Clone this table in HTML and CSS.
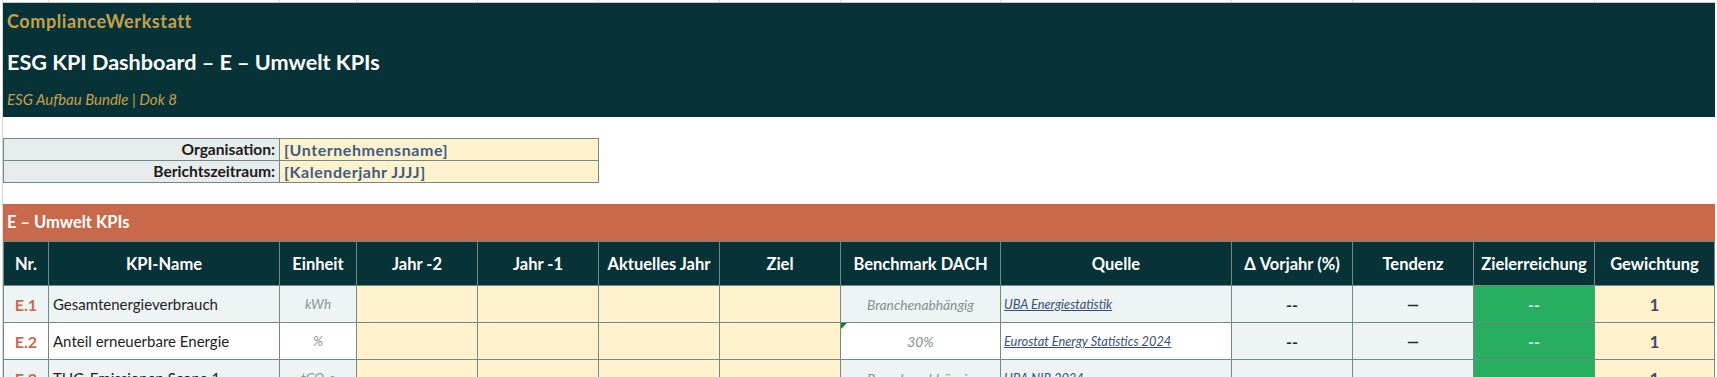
FILE: index.html
```html
<!DOCTYPE html>
<html lang="de">
<head>
<meta charset="utf-8">
<title>ESG KPI Dashboard – E – Umwelt KPIs</title>
<link rel="stylesheet" href="styles.css">
</head>
<body>
<div class="sheet">
  <div class="gridstrip">
    <span></span><span></span><span></span><span></span><span></span><span></span><span></span><span></span><span></span><span></span><span></span><span></span><span></span>
  </div>

  <header class="banner">
    <div class="brand">ComplianceWerkstatt</div>
    <h1 class="title">ESG KPI Dashboard – E – Umwelt KPIs</h1>
    <div class="subtitle">ESG Aufbau Bundle | Dok 8</div>
  </header>

  <div class="meta">
    <div class="meta-label">Organisation:</div>
    <div class="meta-value">[Unternehmensname]</div>
    <div class="meta-label">Berichtszeitraum:</div>
    <div class="meta-value">[Kalenderjahr JJJJ]</div>
  </div>

  <div class="section">E – Umwelt KPIs</div>

  <div class="kpi">
    <div class="h">Nr.</div>
    <div class="h">KPI-Name</div>
    <div class="h">Einheit</div>
    <div class="h">Jahr -2</div>
    <div class="h">Jahr -1</div>
    <div class="h">Aktuelles Jahr</div>
    <div class="h">Ziel</div>
    <div class="h">Benchmark DACH</div>
    <div class="h">Quelle</div>
    <div class="h">Δ Vorjahr (%)</div>
    <div class="h">Tendenz</div>
    <div class="h">Zielerreichung</div>
    <div class="h">Gewichtung</div>

    <div class="c light nr">E.1</div>
    <div class="c light name">Gesamtenergieverbrauch</div>
    <div class="c light unit">kWh</div>
    <div class="c cream"></div>
    <div class="c cream"></div>
    <div class="c cream"></div>
    <div class="c cream"></div>
    <div class="c light bench">Branchenabhängig</div>
    <div class="c light src"><a class="link">UBA Energiestatistik</a></div>
    <div class="c light dash">--</div>
    <div class="c light trend">—</div>
    <div class="c green goal">--</div>
    <div class="c cream weight">1</div>

    <div class="c white nr">E.2</div>
    <div class="c white name">Anteil erneuerbare Energie</div>
    <div class="c white unit">%</div>
    <div class="c cream"></div>
    <div class="c cream"></div>
    <div class="c cream"></div>
    <div class="c cream"></div>
    <div class="c white bench note">30%</div>
    <div class="c white src"><a class="link">Eurostat Energy Statistics 2024</a></div>
    <div class="c light dash">--</div>
    <div class="c light trend">—</div>
    <div class="c green goal">--</div>
    <div class="c cream weight">1</div>

    <div class="c light nr">E.3</div>
    <div class="c light name">THG-Emissionen Scope 1</div>
    <div class="c light unit">tCO₂e</div>
    <div class="c cream"></div>
    <div class="c cream"></div>
    <div class="c cream"></div>
    <div class="c cream"></div>
    <div class="c light bench">Branchenabhängig</div>
    <div class="c light src"><a class="link">UBA NIR 2024</a></div>
    <div class="c light dash">--</div>
    <div class="c light trend">—</div>
    <div class="c green goal">--</div>
    <div class="c cream weight">1</div>
  </div>
</div>
</body>
</html>
```

FILE: styles.css
```css
html, body {
  margin: 0;
  padding: 0;
  background: #ffffff;
  overflow: hidden;
}

body {
  font-family: Lato, "Open Sans", "Noto Sans", sans-serif;
  color: #1e1e1e;
}

.sheet {
  margin-left: 2px;
  border-left: 1px solid #d6d6d6;
  min-height: 400px;
}

/* faint spreadsheet gridlines above the banner */
.gridstrip {
  display: grid;
  grid-template-columns: 45px 230px 76px 120px 120px 120px 120px 159px 230px 120px 120px 120px 120px;
  column-gap: 1px;
  background: #dadada;
  height: 2px;
  width: 1712px;
  border-bottom: 1px solid #c9c9c9;
}
.gridstrip span {
  background: #ffffff;
}

/* banner */
.banner {
  width: 1712px;
  background: #073338;
  padding: 0 0 4px 4px;
  box-sizing: border-box;
  height: 114px;
}
.brand {
  font-size: 18px;
  font-weight: 700;
  letter-spacing: 0.6px;
  line-height: 36px;
  color: #c8a04a;
}
.title {
  margin: 0;
  font-size: 21.6px;
  font-weight: 700;
  line-height: 47px;
  color: #ffffff;
}
.subtitle {
  font-size: 15px;
  font-style: italic;
  line-height: 27px;
  color: #c8a04a;
}

/* organisation meta table */
.meta {
  margin-top: 21px;
  display: grid;
  grid-template-columns: 275px 318px;
  grid-auto-rows: 21px;
  gap: 1px;
  width: 596px;
  box-sizing: border-box;
  border: 1px solid #6e8b86;
  background: #6e8b86;
}
.meta-label {
  background: #e6ecec;
  font-weight: 700;
  font-size: 15.6px;
  text-align: right;
  padding-right: 4px;
  line-height: 21px;
  color: #1b1b1b;
}
.meta-value {
  background: #fff2cc;
  font-weight: 700;
  font-size: 16px;
  letter-spacing: 0.55px;
  line-height: 21px;
  padding-left: 4px;
  color: #3e5c84;
}

/* section bar */
.section {
  margin-top: 21px;
  width: 1712px;
  height: 37px;
  background: #c8694c;
  color: #ffffff;
  font-weight: 700;
  font-size: 16.5px;
  line-height: 37px;
  padding-left: 4px;
  box-sizing: border-box;
}

/* KPI grid */
.kpi {
  display: grid;
  grid-template-columns: 44px 230px 76px 120px 120px 120px 120px 159px 230px 120px 120px 120px 119px;
  grid-template-rows: 43px 36px 36px 36px;
  gap: 1px;
  width: 1712px;
  box-sizing: border-box;
  border: 1px solid #6e8b86;
  background: #6e8b86;
}

.h {
  background: #073338;
  color: #ffffff;
  font-weight: 700;
  font-size: 16.5px;
  display: flex;
  align-items: center;
  justify-content: center;
  white-space: nowrap;
}

.c {
  display: flex;
  align-items: center;
  justify-content: center;
  font-size: 15px;
  white-space: nowrap;
  overflow: hidden;
}

.light { background: #eef3f3; }
.white { background: #ffffff; }
.cream { background: #fff2cc; }
.green { background: #27ae60; }

.nr {
  color: #c8694c;
  font-weight: 700;
  font-size: 16px;
}
.name {
  justify-content: flex-start;
  padding-left: 4px;
  color: #1e1e1e;
}
.unit {
  font-style: italic;
  font-size: 13.5px;
  color: #8a9696;
}
.bench {
  font-style: italic;
  font-size: 13.8px;
  color: #858f8f;
}
.note {
  position: relative;
}
.note::before {
  content: "";
  position: absolute;
  left: 0;
  top: 0;
  border-top: 6px solid #1f7a2e;
  border-right: 6px solid transparent;
}
.src {
  justify-content: flex-start;
  padding-left: 3px;
}
.link {
  font-style: italic;
  font-size: 12.8px;
  text-decoration: underline;
  color: #364f7a;
}
.dash {
  font-weight: 700;
  font-size: 16px;
  color: #1e2a2a;
}
.trend {
  font-weight: 900;
  font-size: 15px;
  color: #1e2a2a;
}
.goal {
  font-weight: 700;
  font-size: 16px;
  color: #dff3e6;
}
.weight {
  font-weight: 700;
  font-size: 17px;
  color: #3c4a6b;
}
```
